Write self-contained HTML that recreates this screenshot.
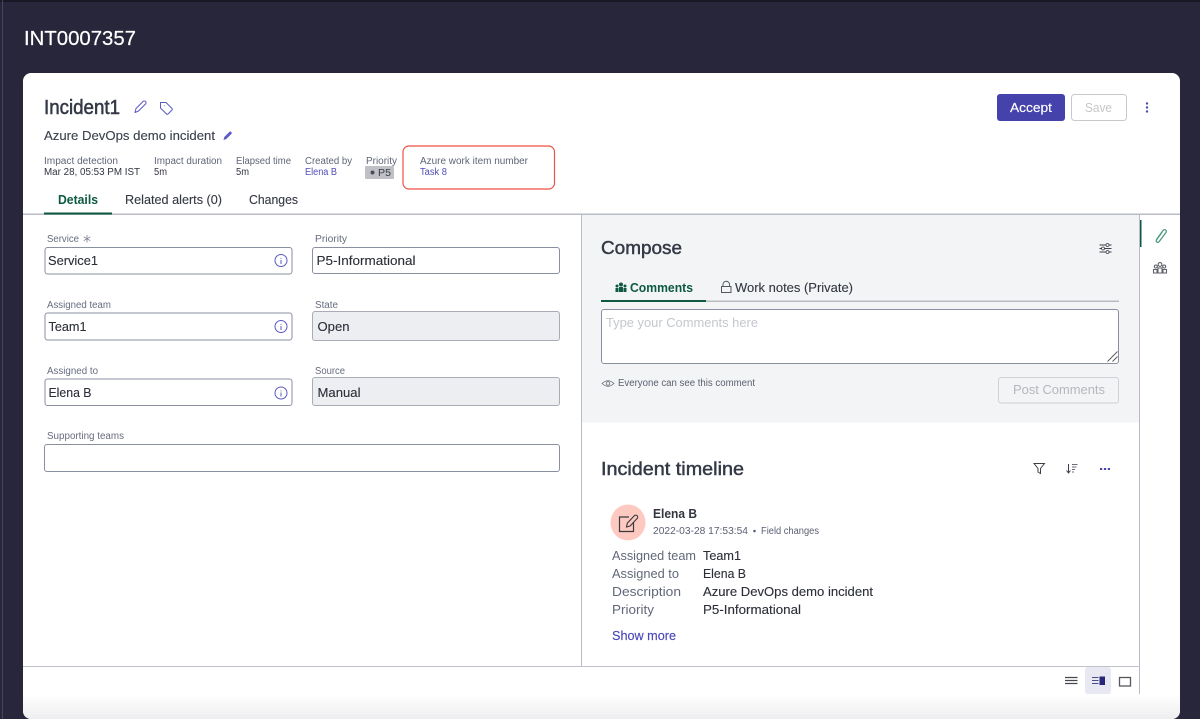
<!DOCTYPE html>
<html><head><meta charset="utf-8"><title>INT0007357</title>
<style>
html,body{margin:0;padding:0;width:1200px;height:719px;overflow:hidden;background:#27263b}
svg{display:block;filter:blur(.35px)}
text{font-family:"Liberation Sans",sans-serif;white-space:pre}
.m{font-size:10px;fill:#5f6578}
.v{font-size:10px;fill:#30343f}
.l{font-size:10px;fill:#666c7e}
.b{font-size:13px;fill:#2c2f38;stroke:#2c2f38;stroke-width:.12}
.tl{font-size:13px;fill:#626879}
.h{font-size:18px;fill:#343946;stroke:#343946;stroke-width:.45}
.ic{fill:none;stroke:#5b59c4;stroke-width:1;stroke-linejoin:round}
.f{stroke:#8a8f9f;fill:#fff}
.d{stroke:#a9acb6;fill:#edeef1}
</style></head><body>
<svg width="1200" height="719" viewBox="0 0 1200 719" xmlns="http://www.w3.org/2000/svg">
<defs><linearGradient id="g" x1="0" y1="0" x2="0" y2="1"><stop offset="0" stop-color="#fff"/><stop offset="1" stop-color="#eeeef0"/></linearGradient></defs>
<rect width="1200" height="719" fill="#27263b"/>
<rect width="1200" height="2" fill="#191824"/>
<rect x="2" y="0" width="1" height="719" fill="#45445a"/>
<text x="24" y="45" font-size="20" fill="#fff" stroke="#fff" stroke-width=".2" textLength="112" lengthAdjust="spacingAndGlyphs">INT0007357</text>

<rect x="23" y="73" width="1157" height="646" rx="8" fill="#fff"/>
<path d="M23 694H1180V711a8 8 0 0 1-8 8H31a8 8 0 0 1-8-8Z" fill="url(#g)"/>

<text x="44" y="114" font-size="20" fill="#343946" stroke="#343946" stroke-width=".55" textLength="76" lengthAdjust="spacingAndGlyphs">Incident1</text>
<path class="ic" d="M135 112.500l1-4 7-7a1.500 1.500 0 0 1 2.500 2.500l-7 7Z"/>
<path class="ic" d="M160.500 102.500h5.500l6 6a1 1 0 0 1 0 1.500l-4 4a1 1 0 0 1-1.500 0l-6-6ZM164 105.800h.6" stroke-width="1.100"/>
<text x="44" y="140" font-size="13" fill="#3b404d" stroke="#3b404d" stroke-width=".12" textLength="171" lengthAdjust="spacingAndGlyphs">Azure DevOps demo incident</text>
<path d="M223.500 140l.8-3 5-5a1.200 1.200 0 0 1 2 2l-5 5Z" fill="#5b59c4"/>

<text class="m" x="44" y="164" textLength="74" lengthAdjust="spacingAndGlyphs">Impact detection</text>
<text class="v" x="44" y="175" textLength="96" lengthAdjust="spacingAndGlyphs">Mar 28, 05:53 PM IST</text>
<text class="m" x="154" y="164" textLength="68" lengthAdjust="spacingAndGlyphs">Impact duration</text>
<text class="v" x="154" y="175" textLength="13" lengthAdjust="spacingAndGlyphs">5m</text>
<text class="m" x="236" y="164" textLength="55" lengthAdjust="spacingAndGlyphs">Elapsed time</text>
<text class="v" x="236" y="175" textLength="13" lengthAdjust="spacingAndGlyphs">5m</text>
<text class="m" x="305" y="164" textLength="47" lengthAdjust="spacingAndGlyphs">Created by</text>
<text x="305" y="175" font-size="10" fill="#4f4db8" textLength="32" lengthAdjust="spacingAndGlyphs">Elena B</text>
<text class="m" x="366" y="164" textLength="31" lengthAdjust="spacingAndGlyphs">Priority</text>
<rect x="365" y="166" width="29" height="13" rx="1" fill="#bfc1c6"/>
<circle cx="372.500" cy="172.500" r="2" fill="#4a4d55"/>
<text x="378" y="176" font-size="10" fill="#3a3d46" textLength="13" lengthAdjust="spacingAndGlyphs">P5</text>
<rect x="403" y="146" width="151.500" height="43" rx="6" fill="none" stroke="#ef4f43" stroke-width="1.200"/>
<text class="m" x="420" y="164" textLength="108" lengthAdjust="spacingAndGlyphs">Azure work item number</text>
<text x="420" y="175" font-size="10" fill="#4f4db8" textLength="27" lengthAdjust="spacingAndGlyphs">Task 8</text>

<rect x="997" y="94" width="68" height="27" rx="3" fill="#4543ab"/>
<text x="1010" y="112" font-size="13" fill="#fff" stroke="#fff" stroke-width=".15" textLength="42" lengthAdjust="spacingAndGlyphs">Accept</text>
<rect x="1071.500" y="94.500" width="55" height="26" rx="3" fill="#fff" stroke="#c9c9cb"/>
<text x="1085" y="112" font-size="13" fill="#c6c6c8" textLength="27" lengthAdjust="spacingAndGlyphs">Save</text>
<circle cx="1147" cy="103.500" r="1.200" fill="#4f4db8"/><circle cx="1147" cy="107.500" r="1.200" fill="#4f4db8"/><circle cx="1147" cy="111.500" r="1.200" fill="#4f4db8"/>

<text x="58" y="204" font-size="13" font-weight="700" fill="#0d5a40" textLength="40" lengthAdjust="spacingAndGlyphs">Details</text>
<text x="125" y="204" font-size="13" fill="#343843" stroke="#343843" stroke-width=".12" textLength="97" lengthAdjust="spacingAndGlyphs">Related alerts (0)</text>
<text x="249" y="204" font-size="13" fill="#343843" stroke="#343843" stroke-width=".12" textLength="49" lengthAdjust="spacingAndGlyphs">Changes</text>
<rect x="23" y="213.500" width="1157" height="1.500" fill="#b9bbc6"/>
<rect x="44" y="212.500" width="68" height="2" fill="#0d5a40"/>

<!-- left form -->
<text class="l" x="47" y="242" textLength="32" lengthAdjust="spacingAndGlyphs">Service</text>
<path d="M87 235v7.500M83.700 236.800l6.600 3.900M90.300 236.800l-6.600 3.900" stroke="#7a7f8e" stroke-width=".8" fill="none"/>
<rect class="f" x="45" y="247.500" width="247" height="26.500" rx="2.500"/>
<text class="b" x="48" y="265" textLength="50" lengthAdjust="spacingAndGlyphs">Service1</text>
<circle cx="281" cy="260.500" r="6" class="ic"/><path d="M281 258v.9M281 260v4" class="ic"/>

<text class="l" x="47" y="308" textLength="64" lengthAdjust="spacingAndGlyphs">Assigned team</text>
<rect class="f" x="45" y="313" width="247" height="27" rx="2.500"/>
<text class="b" x="48.500" y="331" textLength="38" lengthAdjust="spacingAndGlyphs">Team1</text>
<circle cx="281" cy="326.500" r="6" class="ic"/><path d="M281 324v.9M281 326v4" class="ic"/>

<text class="l" x="47" y="374" textLength="51" lengthAdjust="spacingAndGlyphs">Assigned to</text>
<rect class="f" x="45" y="379" width="247" height="26.500" rx="2.500"/>
<text class="b" x="48.500" y="397" textLength="43" lengthAdjust="spacingAndGlyphs">Elena B</text>
<circle cx="281" cy="393" r="6" class="ic"/><path d="M281 390.500v.9M281 392.500v4" class="ic"/>

<text class="l" x="315" y="242" textLength="32" lengthAdjust="spacingAndGlyphs">Priority</text>
<rect class="f" x="312.500" y="247.500" width="247" height="26" rx="2.500"/>
<text class="b" x="316.500" y="265" textLength="99" lengthAdjust="spacingAndGlyphs">P5-Informational</text>

<text class="l" x="315" y="308" textLength="23" lengthAdjust="spacingAndGlyphs">State</text>
<rect class="d" x="312.500" y="311.500" width="247" height="29" rx="2.500"/>
<text class="b" x="317.500" y="331" textLength="32" lengthAdjust="spacingAndGlyphs">Open</text>

<text class="l" x="315" y="374" textLength="30" lengthAdjust="spacingAndGlyphs">Source</text>
<rect class="d" x="312.500" y="377.500" width="247" height="28" rx="2.500"/>
<text class="b" x="317.500" y="397" textLength="43" lengthAdjust="spacingAndGlyphs">Manual</text>

<text class="l" x="47" y="439" textLength="77" lengthAdjust="spacingAndGlyphs">Supporting teams</text>
<rect class="f" x="44.500" y="444.500" width="515" height="27" rx="2.500"/>

<!-- right panel -->
<rect x="582" y="215" width="557" height="207.500" fill="#f3f4f6"/>
<rect x="581" y="215" width="1" height="451" fill="#b9bbc6"/>
<rect x="1139" y="215" width="1" height="479" fill="#b9bbc6"/>
<rect x="1140" y="220" width="1.500" height="27" fill="#0d5a40"/>
<path d="M1156.500 239.500l6.500-9a1.800 1.800 0 0 1 3 2l-6.800 9a1.500 1.500 0 0 1-2.800-1.500l5.800-8" fill="none" stroke="#4f9a80" stroke-width="1.300" stroke-linejoin="round"/>
<g fill="none" stroke="#5f6269" stroke-width="1.100"><circle cx="1160" cy="264.500" r="1.900"/><circle cx="1155.800" cy="266.500" r="1.500"/><circle cx="1164.200" cy="266.500" r="1.500"/><path d="M1153.500 269.500h3.500v3.500h-3.500ZM1158 268h4v5h-4ZM1163 269.500h3.500v3.500H1163Z"/></g>

<text class="h" x="601" y="254" textLength="81" lengthAdjust="spacingAndGlyphs">Compose</text>
<path d="M1099.500 245h12M1099.500 248.500h12M1099.500 252h12" stroke="#3d404a" stroke-width=".9"/>
<circle cx="1107.500" cy="245" r="1.500" fill="#f3f4f6" stroke="#3d404a" stroke-width=".8"/><circle cx="1103" cy="248.500" r="1.500" fill="#f3f4f6" stroke="#3d404a" stroke-width=".8"/><circle cx="1107.500" cy="252" r="1.500" fill="#f3f4f6" stroke="#3d404a" stroke-width=".8"/>

<g fill="#0d5a40"><circle cx="621" cy="284.500" r="2"/><circle cx="617" cy="286" r="1.500"/><circle cx="625" cy="286" r="1.500"/><path d="M615.500 288h3v4h-3ZM619 287h4v5h-4ZM623.500 288h3v4h-3Z"/></g>
<text x="630" y="292" font-size="13" font-weight="700" fill="#0d5a40" textLength="63" lengthAdjust="spacingAndGlyphs">Comments</text>
<path d="M723 286.500v-2a3.200 3.200 0 0 1 6.500 0v2M721.500 286.500h9.500v6h-9.500Z" fill="none" stroke="#555963"/>
<text x="735" y="292" font-size="13" fill="#343843" stroke="#343843" stroke-width=".12" textLength="118" lengthAdjust="spacingAndGlyphs">Work notes (Private)</text>
<rect x="601" y="300.500" width="518" height="1.500" fill="#b9bbc0"/>
<rect x="601" y="300" width="105" height="2" fill="#0d5a40"/>

<rect class="f" x="601.500" y="309.500" width="517" height="54" rx="2.500"/>
<text x="606" y="327" font-size="13" fill="#c4c7cd" textLength="152" lengthAdjust="spacingAndGlyphs">Type your Comments here</text>
<path d="M1107.500 361.500l10-10M1112.500 361.500l5-5" stroke="#555" stroke-width=".9"/>

<path d="M602 383.500q6-5.500 12 0q-6 5.500-12 0Z" fill="none" stroke="#666b78" stroke-width=".8"/><circle cx="608" cy="383.500" r="1.800" fill="none" stroke="#666b78" stroke-width=".8"/>
<text x="618" y="386" font-size="10" fill="#5b6070" textLength="137" lengthAdjust="spacingAndGlyphs">Everyone can see this comment</text>
<rect x="998.500" y="377.500" width="120" height="25.500" rx="2.500" fill="#f3f4f6" stroke="#cfd1d6"/>
<text x="1013" y="394" font-size="13" fill="#b4b7bd" textLength="92" lengthAdjust="spacingAndGlyphs">Post Comments</text>

<text class="h" x="601" y="475" textLength="143" lengthAdjust="spacingAndGlyphs">Incident timeline</text>
<path d="M1034 463.500h10.500l-4 5v5l-2.500-1.500v-3.500Z" fill="none" stroke="#3d404a"/>
<path d="M1068.500 464v8.500M1066.500 470.500l2 2.500 2-2.500" fill="none" stroke="#3d404a"/><path d="M1072 464.500h5.500M1072 467h4.500M1072 469.500h3M1072 472h2" stroke="#6a6d75" stroke-width=".9"/>
<rect x="1100" y="468" width="2.200" height="2" fill="#4543ab"/><rect x="1103.900" y="468" width="2.200" height="2" fill="#4543ab"/><rect x="1107.800" y="468" width="2.200" height="2" fill="#4543ab"/>

<ellipse cx="628" cy="522.500" rx="17.500" ry="18" fill="#fdc9c0"/>
<path d="M629 517h-9.500v14.500h14V522" fill="none" stroke="#3a3a40" stroke-width="1.200"/>
<path d="M626.500 527l.8-3.800 7-7.500a1.600 1.600 0 0 1 2.800 2.800l-7 7.500Z" fill="none" stroke="#3a3a40" stroke-width="1.100"/>
<text x="653" y="518" font-size="13" font-weight="700" fill="#33363f" textLength="44" lengthAdjust="spacingAndGlyphs">Elena B</text>
<text x="653" y="534" font-size="10" fill="#5a6072" textLength="95" lengthAdjust="spacingAndGlyphs">2022-03-28 17:53:54</text>
<circle cx="754.500" cy="531" r="1.300" fill="#5a6072"/>
<text x="761" y="534" font-size="10" fill="#5a6072" textLength="58" lengthAdjust="spacingAndGlyphs">Field changes</text>

<text class="tl" x="612" y="560" textLength="84" lengthAdjust="spacingAndGlyphs">Assigned team</text>
<text class="tl" x="612" y="578" textLength="67" lengthAdjust="spacingAndGlyphs">Assigned to</text>
<text class="tl" x="612" y="596" textLength="69" lengthAdjust="spacingAndGlyphs">Description</text>
<text class="tl" x="612" y="614" textLength="42" lengthAdjust="spacingAndGlyphs">Priority</text>
<text class="b" x="703" y="560" textLength="38" lengthAdjust="spacingAndGlyphs">Team1</text>
<text class="b" x="703" y="578" textLength="43" lengthAdjust="spacingAndGlyphs">Elena B</text>
<text class="b" x="703" y="596" textLength="170" lengthAdjust="spacingAndGlyphs">Azure DevOps demo incident</text>
<text class="b" x="703" y="614" textLength="98" lengthAdjust="spacingAndGlyphs">P5-Informational</text>
<text x="612" y="640" font-size="13" fill="#4a49b8" stroke="#4a49b8" stroke-width=".15" textLength="64" lengthAdjust="spacingAndGlyphs">Show more</text>

<rect x="23" y="666" width="1117" height="1" fill="#bfc1cb"/>
<rect x="1085" y="667" width="26" height="27" rx="3" fill="#e7e8f2"/>
<path d="M1065 677.500h12.500M1065 680.500h12.500M1065 683.500h12.500" stroke="#45484f" stroke-width="1.200"/>
<path d="M1092 677.500h6.500M1092 680.500h6.500M1092 683.500h6.500" stroke="#4a4c8a" stroke-width="1.100"/>
<rect x="1099.500" y="676.500" width="5.500" height="8.500" fill="#26277a"/>
<rect x="1119.500" y="677.500" width="11" height="8.500" fill="none" stroke="#55585f" stroke-width="1.300"/>
</svg>
</body></html>
